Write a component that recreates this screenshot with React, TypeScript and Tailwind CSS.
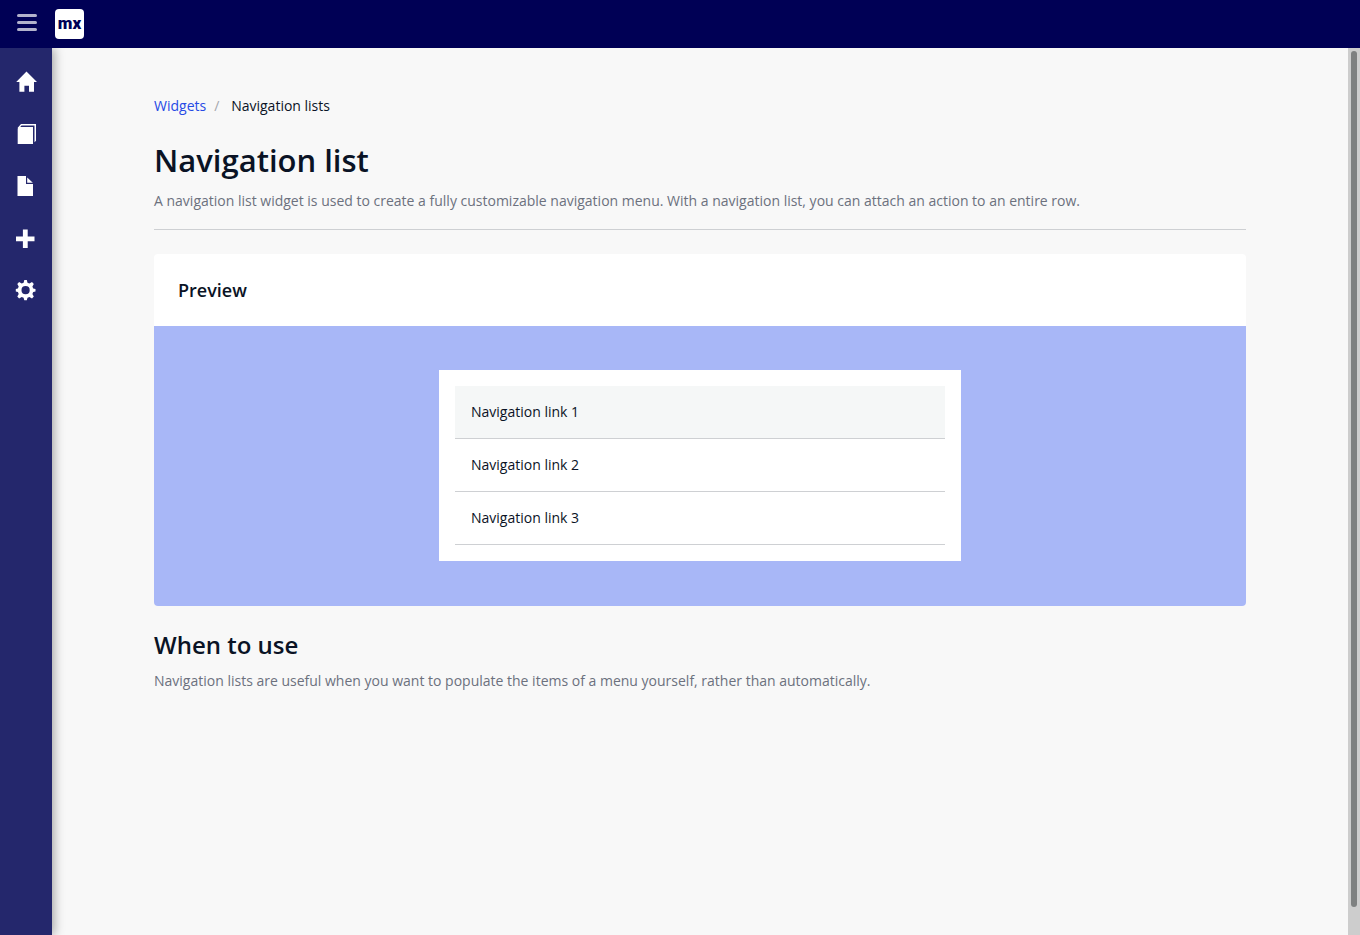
import type { ReactNode } from "react";

function Icon({ children }: { children: ReactNode }) {
  return (
    <svg viewBox="0 0 22 22" className="h-[22px] w-[22px] fill-current" aria-hidden="true">
      {children}
    </svg>
  );
}

const navItems: { label: string; icon: ReactNode }[] = [
  {
    label: "Home",
    icon: <path d="M11.5 0.4 22 11h-3v9.800h-5v-6H9.400v6h-5V11H1.200z" />,
  },
  {
    label: "Templates",
    icon: (
      <>
        <path d="M2.700 5.500 4.500 4H18v17H2.700z" />
        <path d="M2.700 4.800 6 1h15v16.800l-1.500 1.500V2.400H6.500L3.500 6z" />
      </>
    ),
  },
  {
    label: "Pages",
    icon: (
      <>
        <path d="M2.500 1h8.500v8H18v12H2.500z" />
        <path d="M12.200 2.600 17.800 7.800h-5.600z" />
      </>
    ),
  },
  {
    label: "Widgets",
    icon: <path d="M7.900 2.400h4.800v7h6.800v4.800h-6.800V21H7.900v-6.800H1V9.400h6.900z" />,
  },
  {
    label: "Settings",
    icon: (
      <path
        fillRule="evenodd"
        d="M9.300 1h2.500l.7 2.700 1.900.8 2.600-1.400 1.800 1.800-1.400 2.600.8 1.900 2.300.6v2.500l-2.300.6-.8 1.900 1.400 2.600-1.800 1.800-2.600-1.400-1.900.8-.7 2.500H9.300l-.7-2.500-1.900-.8-2.600 1.400-1.800-1.800 1.400-2.600-.8-1.900L.8 12.500V10l2.100-.6.8-1.900-1.400-2.600 1.800-1.800 2.600 1.400 1.900-.8zM10.600 7.100a4.100 4.100 0 1 0 0 8.200 4.100 4.100 0 0 0 0-8.200z"
      />
    ),
  },
];

const links = ["Navigation link 1", "Navigation link 2", "Navigation link 3"];

export default function App() {
  return (
    <div className="flex h-screen flex-col bg-[#f8f8f8] font-['Open_Sans',sans-serif] text-sm text-[#0a1325]">
      <header className="z-20 flex h-12 shrink-0 items-center bg-[#000055] pl-4">
        <button type="button" aria-label="Toggle menu" className="flex w-[22px] flex-col gap-1 px-px pb-[3px]">
          <span className="h-[3px] w-full rounded-full bg-[#b2b2cc]" />
          <span className="h-[3px] w-full rounded-full bg-[#b2b2cc]" />
          <span className="h-[3px] w-full rounded-full bg-[#b2b2cc]" />
        </button>
        <a
          href="#home"
          className="ml-[17px] flex h-[30px] w-[29px] items-center justify-center rounded-[4px] bg-white pb-0.5 font-[Roboto,sans-serif] text-[17px] leading-none font-black text-[#000055]"
        >
          mx
        </a>
      </header>

      <div className="flex min-h-0 flex-1">
        <nav
          aria-label="Main"
          className="z-10 flex w-[52px] shrink-0 flex-col bg-[#24276c] pt-2 text-white shadow-[2px_0_10px_rgba(0,0,0,0.35)]"
        >
          {navItems.map((item) => (
            <a key={item.label} href="#" aria-label={item.label} className="flex h-[52px] items-center pl-[15px]">
              <Icon>{item.icon}</Icon>
            </a>
          ))}
        </nav>

        <main className="min-w-0 flex-1 overflow-hidden">
          <div className="mx-auto max-w-[1140px] px-6 pt-12">
            <nav aria-label="Breadcrumb" className="flex leading-5">
              <a href="#widgets" className="text-[#264ae5]">
                Widgets
              </a>
              <span className="w-[25px] pl-2 text-[#a5a7ad]">/</span>
              <span>Navigation lists</span>
            </nav>

            <h1 className="mt-6 text-[31px] leading-10 font-semibold">Navigation list</h1>
            <p className="mt-[11px] border-b border-[#ced0d3] pb-[18px] leading-5 text-[#6c717e]">
              A navigation list widget is used to create a fully customizable navigation menu. With a navigation list,
              you can attach an action to an entire row.
            </p>

            <section className="mt-6 overflow-hidden rounded-[4px] bg-white">
              <h2 className="px-6 py-6 text-lg leading-6 font-semibold">Preview</h2>
              <div className="flex min-h-[280px] items-start justify-center bg-[#a8b7f7] px-6 py-11">
                <ul className="w-1/2 bg-white p-4">
                  {links.map((link, index) => (
                    <li key={link} className="border-b border-[#ced0d3]">
                      <a href="#" className={index === 0 ? "block bg-[#f5f7f7] p-4 leading-5" : "block p-4 leading-5"}>
                        {link}
                      </a>
                    </li>
                  ))}
                </ul>
              </div>
            </section>

            <h2 className="mt-6 text-2xl leading-[30px] font-semibold">When to use</h2>
            <p className="mt-[11px] leading-5 text-[#6c717e]">
              Navigation lists are useful when you want to populate the items of a menu yourself, rather than
              automatically.
            </p>
          </div>
        </main>

        <div aria-hidden="true" className="flex w-3 shrink-0 flex-col bg-[#cdcdcd] px-[3px] pt-[3px] pb-7">
          <div className="flex-1 rounded-full bg-[#7e8080]" />
        </div>
      </div>
    </div>
  );
}
